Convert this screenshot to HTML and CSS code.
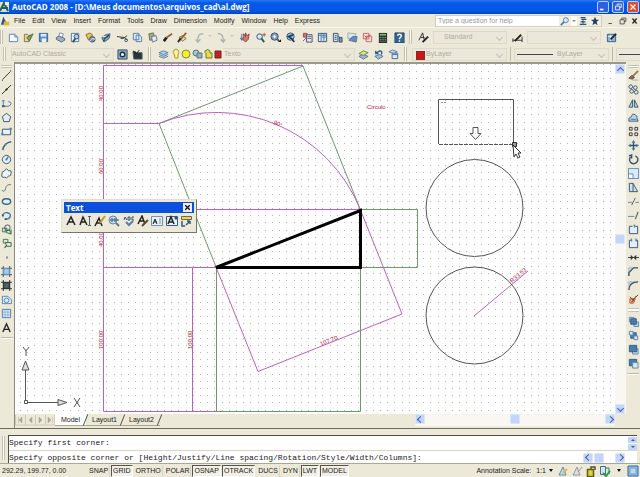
FILE: index.html
```html
<!DOCTYPE html>
<html lang="en">
<head>
<meta charset="utf-8">
<title>AutoCAD 2008</title>
<link rel="stylesheet" href="styles.css">
</head>
<body>
<div class="app">
  <header class="title">
    <svg class="logo" viewBox="0 0 10 12"><path d="M0 1h9v10H0z" fill="#cfe3dc"/><path d="M0 10 4 2l4 8M1 7h7" fill="none" stroke="#24605c" stroke-width="2"/><path d="M5 1h4v3H5z" fill="#e9f4ff"/></svg>
    <h1>AutoCAD 2008 - [D:\Meus documentos\arquivos_cad\al.dwg]</h1>
    <div class="winbtns">
      <button aria-label="Minimize"><svg viewBox="0 0 11 12"><path d="M2 9h4" stroke-width="2"/></svg></button>
      <button aria-label="Restore"><svg viewBox="0 0 11 12"><path d="M4.500 4.500v-2h5v4h-2M2.500 5h5v4.500h-5z"/></svg></button>
      <button class="close" aria-label="Close"><svg viewBox="0 0 11 12"><path d="m2.500 3 6 6m0-6-6 6" stroke-width="1.500"/></svg></button>
    </div>
  </header>

  <nav class="menu">
    <svg class="doc" viewBox="0 0 12 13"><path d="M1 2h7l2 3v7H1z" fill="#f3f0e2"/><path d="M1 11 4 1l5 10z" fill="#33559b"/><path d="M5 7h6v5H4z" fill="#e5b92e"/></svg>
    <button>File</button><button>Edit</button><button>View</button><button>Insert</button><button>Format</button><button>Tools</button><button>Draw</button><button>Dimension</button><button>Modify</button><button>Window</button><button>Help</button><button>Express</button>
    <div class="helpbox">
      <input type="text" aria-label="Help question" placeholder="Type a question for help">
      <button aria-label="Search"><svg viewBox="0 0 12 12"><circle cx="7" cy="5" r="3" fill="#d9ecfa" stroke="#4b75a8"/><path d="m5 7-4 4" stroke="#4b75a8" stroke-width="2"/></svg></button>
      <span class="dd"></span>
      <button aria-label="Communication center"><svg viewBox="0 0 12 12"><path d="M3 2h6M4 4h6M2 10h8M6 5v4M3 7h6" stroke="#31547f" stroke-width="1.500"/></svg></button>
      <button aria-label="Favorites"><svg viewBox="0 0 12 12"><path d="m6 1 1.500 3.500H11L8 7l1 4-3-2-3 2 1-4-3-2.500h3.500z" fill="#243e63" stroke="none"/></svg></button>
    </div>
    <div class="docbtns">
      <button aria-label="Minimize drawing"><svg viewBox="0 0 10 12"><path d="M2 9h4" stroke="#333"/></svg></button>
      <button aria-label="Restore drawing"><svg viewBox="0 0 10 12"><path d="M3.500 4.500v-2h5v4h-2M1.500 4.500h5v5h-5z" stroke="#444"/></svg></button>
      <button aria-label="Close drawing"><svg viewBox="0 0 10 12"><path d="m2 3 5 6m0-6L2 9" stroke="#222" stroke-width="1.500"/></svg></button>
    </div>
  </nav>

  <div class="bar bar1">
    <i class="grip"></i>
    <div class="group">
      <button class="tool" aria-label="New"><svg viewBox="0 0 12 12"><path d="M1.500 2.500h6l3 3v5h-9z" fill="#f2f9ff" stroke="#5b7fa8"/><path d="M7.500 2.500v3h3" stroke="#5b7fa8"/></svg></button>
      <button class="tool" aria-label="Open"><svg viewBox="0 0 12 12"><path d="M1.500 10.500v-8h3l1 1h4l-3 7z" fill="#e9d9a0" stroke="#8a733e"/><path d="m4 6 7-4-4 8z" fill="#7da05a" stroke="#5e6d37"/></svg></button>
      <button class="tool" aria-label="Save"><svg viewBox="0 0 12 12"><path d="M1.500 1.500h9v9h-9z" fill="#5b91c9" stroke="#33618f"/><path d="M3 2h6v3H3z" fill="#d8eafa" stroke="none"/><path d="M4 7h5v4H4z" fill="#e8f3fb" stroke="none"/></svg></button>
    </div>
    <div class="group">
      <button class="tool" aria-label="Plot"><svg viewBox="0 0 12 12"><path d="m4 5 1-4 4 1-1 4" fill="#fff" stroke="#7b8ba0"/><path d="m1.500 6 3-1.500 6 2.500v2l-3.500 2-5.500-3z" fill="#9fb0c5" stroke="#4f6480"/></svg></button>
      <button class="tool" aria-label="Preview"><svg viewBox="0 0 12 12"><path d="M1.500 1.500h8v9h-8z" fill="#e3f1ff" stroke="#53799d"/><circle cx="7" cy="5" r="2.500" fill="#aed0f2"/><path d="M6 7 3 11" stroke-width="2"/></svg></button>
      <button class="tool" aria-label="Publish"><svg viewBox="0 0 12 12"><path d="M1 3 5 1l3 2v4L4 9z" fill="#e8c54d" stroke="#8a6b22"/><circle cx="8" cy="8" r="3" fill="#6d94bd"/><path d="m5 10 3-3 3 1" stroke="#fff"/></svg></button>
      <button class="tool" aria-label="3D DWF"><svg viewBox="0 0 12 12"><path d="m2 6 4-3 5-1-1 5-4 3-3-1z" fill="#79a5c6" stroke="#567"/><path d="m4 7 3-1 3-3M5 8l-1 3" stroke="#264b50" stroke-width="1.500"/><path d="M3 5h3" stroke="#fff"/></svg></button>
    </div>
    <div class="group">
      <button class="tool" aria-label="Cut"><svg viewBox="0 0 12 12"><path d="m0 5 8 1 3 3M11 4 7 7H4" stroke="#262b31"/><circle cx="10" cy="9" r="1.500"/></svg></button>
      <button class="tool" aria-label="Copy"><svg viewBox="0 0 12 12"><path d="M1.500 1.500h6v7h-6zM4.500 3.500h4l2 2v5h-6z" fill="#d8ecfa" stroke="#527ca9"/></svg></button>
      <button class="tool" aria-label="Paste"><svg viewBox="0 0 12 12"><path d="m2 2 5-1 2 7-6 1z" fill="#a3a88c" stroke="#667056"/><path d="m5 5 5-1 1 5-5 2z" fill="#e0edf8" stroke="#647787"/></svg></button>
      <button class="tool" aria-label="Match properties"><svg viewBox="0 0 12 12"><path d="m2 10 3-4" stroke="#222" stroke-width="3"/><path d="m5 6 6-4" stroke="#9b5d2e" stroke-width="2"/></svg></button>
      <button class="tool" aria-label="Block editor"><svg viewBox="0 0 12 12"><path d="m2 6 4-2 4 3-4 3z" fill="#ecdca0" stroke="#786a3d"/><path d="m3 9 7-8" stroke="#985f32" stroke-width="2"/><path d="m1 11 3-4" stroke="#2d2b22" stroke-width="2"/></svg></button>
    </div>
    <div class="group dim">
      <button class="tool" aria-label="Undo"><svg viewBox="0 0 12 12"><path d="M10 2Q4 1 4 10M2 8l2 3 3-3" stroke-width="1.500"/></svg></button><span class="dd"></span>
      <button class="tool" aria-label="Redo"><svg viewBox="0 0 12 12"><path d="M2 2q6-1 6 8M5 8l3 3 2-3" stroke-width="1.500"/></svg></button><span class="dd"></span>
    </div>
    <div class="group">
      <button class="tool" aria-label="Pan"><svg viewBox="0 0 12 12"><path d="M2 2v7m-2-3 2 3 2-3" stroke="#405f86"/><path d="M4 5V2l2 3V1l2 3 2-2-1 6-3 3-3-3z" fill="#d6756c" stroke="#8b4547"/></svg></button>
      <button class="tool" aria-label="Zoom realtime"><svg viewBox="0 0 12 12"><circle cx="5" cy="5" r="3" fill="#d7e7f6"/><path d="m7 7 3 4" stroke-width="2"/><path d="M10 1v4M8 3h4" stroke="#b64b3e"/></svg></button>
      <button class="tool" aria-label="Zoom window"><svg viewBox="0 0 12 12"><circle cx="5" cy="5" r="4" fill="#7d9ab8"/><path d="m8 8 2 2" stroke-width="2"/><path d="M3 5h4M5 3v4" stroke="#fff"/><path d="M9 11h3V8z" fill="#111" stroke="none"/></svg></button>
      <button class="tool" aria-label="Zoom previous"><svg viewBox="0 0 12 12"><circle cx="6" cy="5" r="4" fill="#a8c2dc"/><path d="M9 3 4 5l4 3M8 8l2 3" stroke="#203c5b" stroke-width="2"/></svg></button>
    </div>
    <div class="group">
      <button class="tool" aria-label="Properties"><svg viewBox="0 0 12 12"><path d="M1.500 1.500h4v4h-4z" fill="#d27c71" stroke="#9b4844"/><path d="M5 3h6v8H5z" fill="#dce7f6"/><path d="M6 5h4M6 7h4M1 10l4-4" stroke="#9c4a75"/></svg></button>
      <button class="tool" aria-label="Design center"><svg viewBox="0 0 12 12"><path d="M1.500 1.500h9v9h-9z" fill="#d8ebfa"/><path d="M4.500 2v8M5 5.500h5M7.500 2v8M2 3.500h8" stroke="#4c779d"/></svg></button>
      <button class="tool" aria-label="Tool palettes"><svg viewBox="0 0 12 12"><path d="M1.500 1.500h5v9h-5z" fill="#cfe2f4"/><path d="M3 4h2M3 6h2M3 8h2M7 4l2 3v3h2" stroke="#304f73"/><path d="M8 6h3v5H8z" fill="#7997b6"/></svg></button>
      <button class="tool" aria-label="Sheet set"><svg viewBox="0 0 12 12"><path d="m1 1 9 1-3 5H1z" fill="#d7e6f3" stroke="#9badbc"/><path d="m2 9 4-4h5l-1 6z" fill="#638dba" stroke="#557598"/></svg></button>
      <button class="tool" aria-label="Markup"><svg viewBox="0 0 12 12"><path d="M1.500 1.500h6v6h-6zM4.500 4.500h6v6h-6z" fill="#f7dede" stroke="#c46566"/><path d="m3 4 2 2 4-3" stroke="#b34044"/></svg></button>
      <button class="tool" aria-label="Calculator"><svg viewBox="0 0 12 12"><path d="M2 1h9v11H2z" fill="#25332b" stroke="none"/><path d="M3 3h7" stroke="#79ae72" stroke-width="2"/><path d="M3 6h7M3 8h7M3 10h7" stroke="#aab6ab" stroke-dasharray="1 1"/></svg></button>
    </div>
    <div class="group">
      <button class="tool" aria-label="Help"><svg viewBox="0 0 12 12"><path d="M1 1h10v11H1z" fill="#34648f" stroke="#23496d"/><path d="M4 4q0-1.500 2-1.500t2 1.500-2 3v1M6 9v1.500" stroke="#fff" stroke-width="1.500"/></svg></button>
    </div>
    <i class="grip"></i>
    <button class="tool" aria-label="Text style"><svg viewBox="0 0 12 12"><path d="m1 9 4-8 2 8M3 6h4" stroke="#222"/><path d="m5 11 6-6" stroke="#222" stroke-width="2"/></svg></button>
    <label class="sel w-text"><select aria-label="Text style" disabled><option>Standard</option></select></label>
    <button class="tool" aria-label="Dimension style"><svg viewBox="0 0 12 12"><path d="M1 7v4m10-6v6M1 9h10" stroke="#333"/><path d="m3 10 7-7" stroke="#222" stroke-width="2"/></svg></button>
    <label class="sel w-text"><select aria-label="Dimension style" disabled><option></option></select></label>
    <button class="tool" aria-label="Table style"><svg viewBox="0 0 12 12"><path d="M1.500 2.500h9v8h-9z" fill="#8ab5e0" stroke="#345a86"/><path d="M2 5h8M5 3v7" stroke="#dcebfa"/><path d="m5 8 6-6" stroke="#222" stroke-width="2"/></svg></button>
  </div>

  <div class="bar bar2">
    <i class="grip"></i>
    <label class="sel w-work"><select aria-label="Workspace" disabled><option>AutoCAD Classic</option></select></label>
    <button class="tool" aria-label="Workspace settings"><svg viewBox="0 0 12 12"><path d="M1 1h10v10H1z" fill="#8ca9c4" stroke="#334a61"/><circle cx="6" cy="6" r="2.500" fill="#e8f2fa" stroke="#1f3348" stroke-width="1.500"/></svg></button>
    <button class="tool" aria-label="My workspace"><svg viewBox="0 0 12 12"><path d="M1 3h3l1 1h6v7H2z" fill="#273440" stroke="#4a5a66"/><path d="m1 2 4 3 3-4" stroke="#222"/></svg></button>
    <i class="grip"></i>
    <button class="tool" aria-label="Layers"><svg viewBox="0 0 12 12"><path d="m1 4 5-2 5 2-5 2zM1 6l5 2 5-2M1 8l5 2 5-2" fill="#b9d1e8" stroke="#587da3"/></svg></button>
    <div class="layer">
      <svg viewBox="0 0 52 12"><path d="M3.500 7Q1 4 3 2q2-2 4 0t0 5v3h-3z" fill="#fbf28c" stroke="#a99a38"/><circle cx="15" cy="6" r="4" fill="#f9ef24" stroke="#8a8931"/><circle cx="25" cy="5" r="3" fill="#a6c9d5" stroke="#527782"/><path d="M26 5h5v5h-5z" fill="#9eacb4" stroke="#647580"/><path d="M34 5V3q3-3 5 0v2h2v5h-6V5" fill="#e7dd4a" stroke="#6b7d2c"/><path d="M44 3h6v7h-6z" fill="#c81e20" stroke="#63292a"/></svg>
      <label class="sel"><select aria-label="Layer" disabled><option>Texto</option></select></label>
    </div>
    <button class="tool" aria-label="Make layer current"><svg viewBox="0 0 12 12"><path d="m1 8 5-2 5 2-5 3z" fill="#98b9d9" stroke="#517aa1"/><path d="m1 5 5-3 5 2-5 3z" fill="#e1df85" stroke="#718449"/></svg></button>
    <button class="tool" aria-label="Layer previous"><svg viewBox="0 0 12 12"><path d="m2 8 5-2 4 2-5 3z" fill="#9ebddb" stroke="#517aa1"/><path d="M9 6q2-4-2-4L3 5m0-3v3h3" stroke="#355b84" stroke-width="1.500"/></svg></button>
    <button class="tool" aria-label="Layer states"><svg viewBox="0 0 12 12"><path d="m1 3 4-2 5 2-4 2z" fill="#c2d9ee" stroke="#587da3"/><path d="M4.500 4.500h6v6h-6z" fill="#d8eafa" stroke="#3d6a98"/><path d="M5 6h5" stroke="#3d6a98"/></svg></button>
    <i class="grip"></i>
    <label class="sel w-prop swatch"><select aria-label="Color" disabled><option>ByLayer</option></select></label>
    <i class="rule"></i>
    <label class="sel w-prop line"><select aria-label="Linetype" disabled><option>ByLayer</option></select></label>
    <i class="rule"></i>
    <label class="sel w-rest line"><select aria-label="Lineweight" disabled><option></option></select></label>
  </div>

  <main class="work">
    <aside class="side">
      <i class="hgrip"></i>
      <button class="tool" aria-label="Line"><svg viewBox="0 0 12 12"><path d="m2 10 8-8" stroke="#333"/><path d="M1 11h1M10 1h1" stroke="#39714c" stroke-width="2"/></svg></button>
      <button class="tool" aria-label="Construction line"><svg viewBox="0 0 12 12"><path d="m1 11 10-10" stroke="#222"/><path d="m5 7 2-2" stroke="#1f5d35" stroke-width="2"/></svg></button>
      <button class="tool" aria-label="Polyline"><svg viewBox="0 0 12 12"><path d="M1 3h3M2.500 3v6M2 9h6q3-1 3-3T8 4" stroke="#47749d"/><path d="M1 9h3" stroke="#2c5c87" stroke-width="2"/></svg></button>
      <button class="tool" aria-label="Polygon"><svg viewBox="0 0 12 12"><path d="m6 1.500 4.500 3.500L9 10.500H3L1.500 5z" fill="#e6edf1"/></svg></button>
      <button class="tool" aria-label="Rectangle"><svg viewBox="0 0 12 12"><path d="M1.500 3.500h9v6h-9z" fill="#e6f1fa"/><path d="M0 9h3M9 3h3" stroke="#5b8dba" stroke-width="2"/></svg></button>
      <button class="tool" aria-label="Arc"><svg viewBox="0 0 12 12"><path d="M2 11Q3 3 11 2" stroke-width="1.500"/><path d="M1 10h2M4 5h2M9 2h2" stroke="#4d8bbd" stroke-width="2"/></svg></button>
      <button class="tool" aria-label="Circle"><svg viewBox="0 0 12 12"><circle cx="6" cy="6" r="4.500" fill="#e5f0fa"/><path d="m5 7 3-4M5 6h2" stroke="#4277ad" stroke-width="1.500"/></svg></button>
      <button class="tool" aria-label="Revision cloud"><svg viewBox="0 0 12 12"><path d="M4 3q2-4 4 0 4-1 3 3 0 3-3 3-2 3-4 1-4 1-3-3-1-3 3-4z" fill="#edf3f7"/></svg></button>
      <button class="tool" aria-label="Spline"><svg viewBox="0 0 12 12"><path d="M1 9q3 3 4-2t6-4" stroke="#567b6a"/></svg></button>
      <button class="tool" aria-label="Ellipse"><svg viewBox="0 0 12 12"><ellipse cx="6" cy="6" rx="4.500" ry="3" fill="#e7f2fa" stroke="#376189" stroke-width="1.500"/></svg></button>
      <button class="tool" aria-label="Ellipse arc"><svg viewBox="0 0 12 12"><path d="M2 6q1-4 5-3t3 4-5 3" stroke="#4778a6" stroke-width="1.500"/><path d="M1 6h2M4 10h2" stroke="#24537b" stroke-width="2"/></svg></button>
      <button class="tool" aria-label="Insert block"><svg viewBox="0 0 12 12"><path d="M1.500 4.500h5v4h-5z" fill="#d7ead9" stroke="#47714e"/><circle cx="7" cy="4" r="3"/><path d="m5 9 6 2V6M4 7h6v4" stroke="#3a744e"/></svg></button>
      <button class="tool" aria-label="Make block"><svg viewBox="0 0 12 12"><path d="M2.500 1.500h5v4h-5z" fill="#d7ead9" stroke="#47714e"/><path d="M5 5h6v4H6z" fill="#e4f1e5" stroke="#31603c"/><path d="m4 11 2-3" stroke="#222"/></svg></button>
      <button class="tool" aria-label="Point"><svg viewBox="0 0 12 12"><path d="M6 5h1v2H6z" fill="#222" stroke="none"/></svg></button>
      <button class="tool" aria-label="Hatch"><svg viewBox="0 0 12 12"><path d="M2.500 0v12M9.500 0v12M0 2.500h12M0 9.500h12"/><path d="M3 3h6v6H3z" fill="#a4cdec" stroke="#6799c1"/></svg></button>
      <button class="tool" aria-label="Gradient"><svg viewBox="0 0 12 12"><path d="M2.500 0v12M9.500 0v12M0 2.500h12M0 9.500h12" stroke="#222"/><path d="M3 3h6v6H3z" fill="#55626b" stroke="#252c31"/></svg></button>
      <button class="tool" aria-label="Region"><svg viewBox="0 0 12 12"><path d="M1.500 10.500v-8h6l4 4v4z" fill="#dbeafa" stroke="#5581ae"/><circle cx="6" cy="7" r="2.500" stroke="#5581ae"/></svg></button>
      <button class="tool" aria-label="Table"><svg viewBox="0 0 12 12"><path d="M1.500 1.500h9v9h-9z" fill="#dceafb" stroke="#4c78a5"/><path d="M2 4.500h8M2 7.500h8M4.500 2v8M7.500 2v8" stroke="#8eb2d7"/></svg></button>
      <button class="tool" aria-label="Multiline text"><svg viewBox="0 0 12 12"><path d="m2 11 4-9 4 9M4 8h5" stroke="#222" stroke-width="1.500"/></svg></button>
      <i class="hrule"></i>
    </aside>

    <section class="view">
      <svg class="canvas" role="img" aria-label="Drawing">
        <defs>
          <pattern id="dots" x="5" y="0" width="36" height="36" patternUnits="userSpaceOnUse"><path d="M0 .5h36M0 7.500h36M0 14.500h36M0 22.500h36M0 29.500h36" stroke="#b4b4b4" stroke-dasharray="1 6 1 6 1 7 1 6 1 6"/></pattern>
        </defs>
        <rect width="100%" height="100%" fill="#fff"/>
        <rect width="100%" height="100%" fill="url(#dots)"/>
        <g transform="translate(-16 -64)" fill="none">
          <g stroke="#6a9a66">
            <path d="m160 123.500 144-57.500 57.500 144M160 123.500l57 143.500"/>
            <path d="M361.500 209.500h57v58h-57M217.500 267v144.500h144V267"/>
          </g>
          <g stroke="#bd5ec4">
            <path d="M304 65.500H104.500v346h113M104 123.500h56M104 209.500h257M104 267.500h113M193.500 267v144"/>
            <path d="M160 123.500A155 155 0 0 1 361.500 210L403 314 259 371.500 217 267"/>
            <path d="m475 316 54-45"/>
          </g>
          <path d="M217 267.500 361.500 210.500v57z" stroke="#000" stroke-width="3"/>
          <g stroke="#555">
            <circle cx="475.500" cy="208" r="48.500"/><circle cx="475.500" cy="315.500" r="48.500"/>
            <path d="M439.500 144V99.500h75v45"/><path d="M440 144.500h75" stroke-dasharray="4 1"/>
            <path d="M442 102.500h6" stroke="#999" stroke-dasharray="2 1"/>
            <path d="M474 127.500h5v6h3l-5.500 6-5.500-6h3z" fill="#fff"/>
            <path d="M26.500 401V369M28 402.500h32"/>
            <path d="m26.500 361-3.500 9h7zM68 402.500l-9-3v6z" fill="#ddd"/>
            <path d="m24 347 3 4 3-4m-3 4v5M75 398l6 9m0-9-6 9"/>
            <path d="M25.500 400.500h3v3h-3z"/>
          </g>
          <path d="M513.500 142.500h4v4h-4z" stroke="#333" fill="#999"/>
          <path d="m514 145 1 12 2-3 2 4 2-1-2-4h3z" fill="#fff" stroke="#333"/>
          <g class="dims">
            <text transform="translate(104 101) rotate(-90)">40.00</text>
            <text transform="translate(104 174) rotate(-90)">60.00</text>
            <text transform="translate(104 247) rotate(-90)">40.00</text>
            <text transform="translate(104 349) rotate(-90)">100.00</text>
            <text transform="translate(193 349) rotate(-90)">100.00</text>
            <text transform="translate(322 346) rotate(-22)">107.70</text>
            <text transform="translate(513 283) rotate(-40)">R33.53</text>
            <text transform="translate(274 124) rotate(24)">90°</text>
            <text x="368" y="109">Circulo</text>
          </g>
        </g>
      </svg>
      <div class="vscroll"><button class="sb up" aria-label="Scroll up"></button><i class="thumb"></i><button class="sb down" aria-label="Scroll down"></button></div>
      <div class="tabs">
        <svg class="tabnav" viewBox="0 0 40 12"><path d="M.5 1v10h39V1M10.500 1v10M20.500 1v10M30.500 1v10" stroke="#cfcbbb" fill="none"/><path d="M3.500 3v6M7 3v6L4 6zM17 3v6l-3-3zM24 3v6l3-3zM33 3v6l3-3zM37.500 3v6" fill="#aaa798" stroke="#aaa798" stroke-width=".5"/></svg>
        <button class="tab on">Model</button><button class="tab">Layout1</button><button class="tab">Layout2</button>
      </div>
      <div class="hscroll"><button class="sb left" aria-label="Scroll left"></button><i class="thumb"></i><button class="sb right" aria-label="Scroll right"></button></div>

      <div class="palette">
        <div class="ptitle"><span>Text</span><button aria-label="Close"><svg viewBox="0 0 10 10"><path d="m2.500 2.500 5 5m0-5-5 5" stroke="#111" stroke-width="1.500"/></svg></button></div>
        <div class="pbody">
          <button class="tool" aria-label="Multiline text"><svg viewBox="0 0 12 12"><path d="m2 10 4-8 4 8M4 7h5" stroke="#222" stroke-width="1.500"/></svg></button>
          <button class="tool" aria-label="Single line text"><svg viewBox="0 0 12 12"><path d="m1 10 3-8 4 8M2 7h5" stroke="#222" stroke-width="1.500"/><path d="M10.500 1v10M9 1.500h3M9 10.500h3" stroke="#45617c"/></svg></button>
          <button class="tool" aria-label="Edit text"><svg viewBox="0 0 12 12"><path d="m1 11 4-8 3 8M3 8h4" stroke="#222" stroke-width="1.500"/><path d="m6 8 5-7" stroke="#c79833" stroke-width="2"/></svg></button>
          <button class="tool" aria-label="Find"><svg viewBox="0 0 12 12"><circle cx="5" cy="5" r="4" fill="#c5ddf0" stroke="#6687a5"/><path d="m8 8 3 3" stroke="#577b9b" stroke-width="2"/><path d="M2 5h9M4 3v4M7 3v4" stroke="#365b78"/></svg></button>
          <button class="tool" aria-label="Spell check"><svg viewBox="0 0 12 12"><path d="m1 5 1-3 2 3M5 2v3h2V2zM11 2H9v3h2" stroke="#35536c"/><path d="m3 7 3 3 4-4" stroke="#5381ab" stroke-width="2"/></svg></button>
          <button class="tool" aria-label="Text style"><svg viewBox="0 0 12 12"><path d="m1 9 4-8 3 8M3 6h4" stroke="#222" stroke-width="1.500"/><path d="m5 11 6-6" stroke="#604837" stroke-width="2"/></svg></button>
          <button class="tool" aria-label="Scale text"><svg viewBox="0 0 12 12"><path d="M.5 1.500h11v9H.5z" fill="#e5f1fb" stroke="#6e94b8"/><path d="m2 9 2-5 2 5M3 7h3" stroke="#222"/><path d="M9 3v6" stroke="#6e94b8"/></svg></button>
          <button class="tool" aria-label="Justify text"><svg viewBox="0 0 12 12"><path d="M.5 1.500h11v9H.5z" fill="#e5f1fb" stroke="#385f88"/><path d="m2 9 3-7 3 7M3 7h4" stroke="#222" stroke-width="1.500"/><path d="M9 2h2v2H9z" fill="#385f88"/></svg></button>
          <button class="tool" aria-label="Convert distance"><svg viewBox="0 0 12 12"><path d="M1.500 1.500h10v3h-10z" fill="#ead27a" stroke="#7a6933"/><path d="M2 6v5h3M6 10l4-4m0 0H7m3 0v3" stroke="#315c85" stroke-width="1.500"/></svg></button>
        </div>
      </div>
    </section>

    <aside class="side modify">
      <i class="hgrip"></i>
      <button class="tool" aria-label="Erase"><svg viewBox="0 0 12 12"><path d="m5 7 6-6" stroke="#9d7a42" stroke-width="2"/><path d="m1 9 3-3 3 2-2 2z" fill="#8a6a5e" stroke="#5b4741"/><path d="M5 11h6" stroke="#b0a991"/></svg></button>
      <button class="tool" aria-label="Copy object"><svg viewBox="0 0 12 12"><circle cx="3" cy="3" r="2"/><circle cx="8" cy="4" r="2"/><circle cx="4" cy="8" r="2"/><circle cx="9" cy="9" r="2"/></svg></button>
      <button class="tool" aria-label="Mirror"><svg viewBox="0 0 12 12"><path d="M5 2v8H1zM7 2v8h4z" fill="#bed5e9"/></svg></button>
      <button class="tool" aria-label="Offset"><svg viewBox="0 0 12 12"><path d="M1 10V7l3-2q0-4 4-2 2 1 2 4l1 3z" fill="#b8d5ed" stroke="#31587b"/><path d="M3 8h6" stroke="#476d8f"/></svg></button>
      <button class="tool" aria-label="Array"><svg viewBox="0 0 12 12"><path d="M1.500 1.500h3v3h-3zM7.500 1.500h3v3h-3zM1.500 7.500h3v3h-3zM7.500 7.500h3v3h-3z" stroke="#333"/></svg></button>
      <button class="tool" aria-label="Move"><svg viewBox="0 0 12 12"><path d="M6 2v8M2 6h8" stroke-width="1.500"/><path d="m6 0 2 3H4zM6 12 4 9h4zM0 6l3-2v4zM12 6 9 8V4z" fill="#45789f" stroke="none"/></svg></button>
      <button class="tool" aria-label="Rotate"><svg viewBox="0 0 12 12"><path d="M3 3a4.500 4.500 0 1 0 5-1M1 2l3-1v4" stroke-width="1.500"/></svg></button>
      <button class="tool" aria-label="Scale"><svg viewBox="0 0 12 12"><path d="M.5.500h11v11H.5z" fill="#d9ebfb" stroke="#5d87b1"/><path d="M.5 6.500h5v5h-5z" fill="#fff" stroke="#5d87b1"/></svg></button>
      <button class="tool" aria-label="Stretch"><svg viewBox="0 0 12 12"><path d="M1.500 10.500v-9h4v9zM5.500 1.500l5 9h-5" fill="#cfe2f2"/></svg></button>
      <button class="tool" aria-label="Trim"><svg viewBox="0 0 12 12"><path d="M0 7h5M8 7h4" stroke="#6a8799"/><path d="m4 10 4-8" stroke="#536372"/></svg></button>
      <button class="tool" aria-label="Extend"><svg viewBox="0 0 12 12"><path d="M0 7h7" stroke="#658299"/><path d="m8 10 3-8" stroke="#334"/></svg></button>
      <button class="tool" aria-label="Break at point"><svg viewBox="0 0 12 12"><path d="M5 2.500H1.500v8h9v-8H7" fill="#e2eef9"/><path d="M6 1h1v3" stroke="#4778aa"/></svg></button>
      <button class="tool" aria-label="Break"><svg viewBox="0 0 12 12"><path d="M4 2.500H1.500v8h9v-8H8" fill="#e2eef9"/><path d="M3 1h1v3M8 1h1v3" stroke="#4778aa"/></svg></button>
      <button class="tool" aria-label="Join"><svg viewBox="0 0 12 12"><path d="M0 6h12" stroke="#333"/><path d="m3 3 3 3-3 3zM9 3 6 6l3 3z" fill="#333" stroke="none"/></svg></button>
      <button class="tool" aria-label="Chamfer"><svg viewBox="0 0 12 12"><path d="M1 11V7l5-5h5" stroke-width="1.500"/><path d="M1 6V2h4" stroke="#8ba8c1"/></svg></button>
      <button class="tool" aria-label="Fillet"><svg viewBox="0 0 12 12"><path d="M1 11Q1 2 11 2" stroke-width="1.500"/><path d="M1 6V2h4" stroke="#8ba8c1"/></svg></button>
      <button class="tool" aria-label="Explode"><svg viewBox="0 0 12 12"><path d="M2 5h6l-2 5H2z" fill="#ed9d67" stroke="#c8663f"/><path d="m2 3 5 5M9 2 4 9m7-8-3 3" stroke="#70412e"/></svg></button>
      <i class="hgrip gapped"></i>
      <button class="tool" aria-label="Bring to front"><svg viewBox="0 0 12 12"><path d="M1.500 1.500h5v5h-5zM6.500 6.500h5v5h-5z" fill="#b8d2ea" stroke="#6085a8"/><path d="M3 3h6v6H3z" fill="#4c7ca9" stroke="#315b83"/></svg></button>
      <button class="tool" aria-label="Send to back"><svg viewBox="0 0 12 12"><path d="M3 3h6v6H3z" fill="#4c7ca9" stroke="#315b83"/><path d="M1.500 1.500h4v4h-4zM6.500 6.500h4v4h-4z" fill="#d5e5f3" stroke="#6085a8"/></svg></button>
      <button class="tool" aria-label="Bring above"><svg viewBox="0 0 12 12"><path d="M5 5h6v6H5z" fill="#cbdff0" stroke="#6085a8"/><path d="M1.500 1.500h8v7h-8z" fill="#4c7ca9" stroke="#315b83"/></svg></button>
      <button class="tool" aria-label="Send under"><svg viewBox="0 0 12 12"><path d="M1.500 1.500h8v7h-8z" fill="#4c7ca9" stroke="#315b83"/><path d="M5 5h6v6H5z" fill="#d8e7f4" stroke="#6085a8"/></svg></button>
      <i class="hrule"></i>
    </aside>
  </main>

  <section class="command">
    <i class="cgrip"></i>
    <div class="cbox">
      <div class="crow"><output>Specify first corner:</output><div class="spin"><button aria-label="Scroll history up"></button><button aria-label="Scroll history down"></button></div></div>
      <div class="crow"><input type="text" aria-label="Command line" value="Specify opposite corner or [Height/Justify/Line spacing/Rotation/Style/Width/Columns]:"><div class="cscroll"><button class="sb left" aria-label="Scroll command left"></button><i class="thumb"></i><button class="sb right" aria-label="Scroll command right"></button></div></div>
    </div>
  </section>

  <footer class="status">
    <span class="coords">292.29, 199.77, 0.00</span>
    <button>SNAP</button><button class="on">GRID</button><button>ORTHO</button><button>POLAR</button><button class="on">OSNAP</button><button class="on">OTRACK</button><button>DUCS</button><button>DYN</button><button class="on">LWT</button><button class="on">MODEL</button>
    <span class="scale">Annotation Scale:</span>
    <button class="ratio">1:1<i class="tri"></i></button>
    <div class="tray">
      <button class="tool" aria-label="Annotation visibility"><svg viewBox="0 0 12 12"><path d="m2 10 4-8 3 8z" fill="#c5dced" stroke="#638aae"/><path d="m6 8 4-4" stroke="#ddb743" stroke-width="2"/></svg></button>
      <button class="tool" aria-label="Auto scale"><svg viewBox="0 0 12 12"><path d="m2 10 4-8 3 8zM7 7l4-5" fill="#ddd" stroke="#999"/></svg></button>
      <button class="tool" aria-label="Lock"><svg viewBox="0 0 12 12"><path d="M6 5V2h4v3" stroke="#545329" stroke-width="1.500"/><path d="M2.500 4.500h6v7h-6z" fill="#dfd435" stroke="#5f5b1e" stroke-width="1.500"/></svg></button>
      <button class="tool" aria-label="Standards"><svg viewBox="0 0 12 12"><path d="M1.500 1.500h5v8h-5zM6 3h4v6" fill="#d3e5f2" stroke="#41718b"/><path d="m4 8 3 3 4-5" stroke="#22a044" stroke-width="2"/></svg></button>
      <button class="tool" aria-label="Status menu"><i class="tri"></i></button>
      <button class="tool" aria-label="Clean screen"><svg viewBox="0 0 12 12"><path d="M1 1h10v10H1z" fill="#9cc5e7" stroke="#346591"/><path d="M3 3h6v6H3z" fill="#bcdaf1" stroke="#6d9dc4"/></svg></button>
    </div>
  </footer>
</div>
</body>
</html>
```
FILE: styles.css
```css
* { box-sizing: border-box; }
html, body { height: 100%; }
body {
  margin: 0;
  background: #ece9d8;
  color: #1b1b1b;
  font: 7px/10px "Liberation Sans", Arial, sans-serif;
}
button, input, select, output { font: inherit; color: inherit; }
button { border: 0; margin: 0; padding: 0; background: none; }
svg { display: block; fill: none; stroke: none; }
.app { display: flex; flex-direction: column; height: 100vh; overflow: hidden; }

/* title bar */
.title {
  display: flex;
  align-items: center;
  flex: none;
  height: 14px;
  padding-right: 1px;
  background: linear-gradient(#2b78f0, #0558ea 3px, #0556e4 11px, #0344bd);
  color: #fff;
}
.logo { width: 10px; height: 12px; margin-right: 2px; }
.title h1 { flex: 1; margin: 0; overflow: hidden; white-space: nowrap; font: bold 8px/12px "Open Sans", sans-serif; }
.winbtns { display: flex; gap: 3px; }
.winbtns button { width: 12px; height: 12px; border: 1px solid #b9cff7; border-radius: 2px; background: #2c62df; }
.winbtns svg { width: 10px; height: 10px; stroke: #fff; }
.winbtns .close { background: #d9512c; }

/* menu bar */
.menu { display: flex; align-items: center; flex: none; gap: 1px; height: 13px; }
.menu > button { padding: 0 3px; white-space: nowrap; }
.doc { width: 10px; height: 12px; }
.helpbox { display: flex; align-items: center; width: 167px; height: 12px; margin-left: auto; border: 1px solid #d3cfbe; background: #fff; }
.helpbox input { flex: 1; min-width: 0; padding: 0 2px; border: 0; outline: 0; background: none; }
.helpbox input::placeholder { color: #9a9a9a; opacity: 1; }
.helpbox button { padding: 0 1px; background: #f1eee2; }
.helpbox svg { width: 10px; height: 10px; }
.docbtns { display: flex; gap: 2px; margin-left: 3px; }
.docbtns svg { width: 10px; height: 10px; }
.dd { flex: none; width: 6px; height: 12px; display: grid; place-items: center; }
.dd::after { content: ""; border: 2px solid transparent; border-top-color: #888; border-bottom: 0; }

/* toolbars */
.bar { display: flex; align-items: center; flex: none; overflow: hidden; }
.bar > * { flex: none; }
.bar1 { height: 19px; gap: 3px; border-top: 1px solid #f7f5ec; }
.bar2 { height: 16px; gap: 1px; }
.group { display: flex; gap: 1px; }
.dim { opacity: .35; }
.tool { display: grid; place-items: center; width: 14px; height: 14px; flex: none; }
.tool svg { width: 12px; height: 12px; stroke: #34516d; }
.bar svg { width: 11px; height: 11px; }
.grip { width: 3px; height: 14px; border: solid #c5c1b0; border-width: 0 1px; background: #f9f8f2; }
.bar2 .grip { margin: 0 4px 0 3px; }
.bar1 .grip { margin-right: 1px; }
.bar1 .grip:first-child { margin-right: 0; }
.rule { width: 1px; height: 14px; margin: 0 2px; background: #bdb9a8; }
.sel { position: relative; display: block; height: 13px; }
.sel select {
  appearance: none;
  display: block;
  width: 100%;
  height: 13px;
  padding: 0 12px 0 10px;
  border: 1px solid #dedaca;
  border-radius: 0;
  background: #ebe7da;
  color: #b0ac9d;
  opacity: 1;
}
.sel::after {
  content: "";
  position: absolute;
  right: 5px;
  top: 4px;
  width: 4px;
  height: 4px;
  border: solid #c4c0af;
  border-width: 0 1px 1px 0;
  transform: rotate(45deg);
}
.w-text { width: 74px; }
.w-work { width: 103px; }
.w-work select { padding-left: 0; }
.w-prop { width: 95px; }
.w-rest { flex: 1; }
.layer { display: flex; align-items: center; width: 184px; }
.layer svg { width: 52px; height: 12px; }
.layer .sel { flex: 1; }
.layer select { padding-left: 1px; border-left: 0; }
.swatch::before { content: ""; position: absolute; left: 4px; top: 3px; width: 7px; height: 7px; background: #d41212; border: 1px solid #7b3030; }
.swatch select { padding-left: 13px; }
.line::before { content: ""; position: absolute; left: 3px; top: 6px; width: 36px; height: 1px; background: #444; }
.line select { padding-left: 42px; }

/* workspace */
.work { display: flex; flex: 1; min-height: 0; }
.side { display: flex; flex-direction: column; align-items: center; flex: none; width: 13px; padding-top: 3px; margin-right: 1px; }
.side .tool { width: 12px; }
.side .tool svg { width: 11px; height: 11px; }
.modify { width: 14px; margin: 0; }
.hgrip { width: 11px; height: 3px; border: solid #c5c1b0; border-width: 1px 0; background: #fff; }
.gapped { margin: 2px 0; height: 4px; }
.hrule { width: 12px; height: 2px; margin-top: 3px; border-top: 1px solid #bdb9a8; background: #fff; }
.view {
  position: relative;
  display: grid;
  grid-template: minmax(0, 1fr) 14px / minmax(0, 2fr) minmax(0, 1fr) 11px;
  flex: 1;
  min-width: 0;
  border-top: 2px solid #9b9889;
  border-left: 1px solid #8c897c;
}
.canvas { grid-column: 1 / 3; width: 100%; height: 100%; overflow: hidden; }
.dims { font: 6px/8px "Liberation Sans", Arial, sans-serif; fill: #c02030; }

.sb, .thumb { display: grid; place-items: center; width: 10px; height: 10px; border: 1px solid #dce6fb; border-radius: 1px; background: #c3d5fb; }
.sb::after { content: ""; width: 4px; height: 4px; border: solid #3f5f9e; border-width: 1px 1px 0 0; }
.sb.up::after { transform: translateY(1px) rotate(-45deg); }
.sb.down::after { transform: translateY(-1px) rotate(135deg); }
.sb.left::after { transform: rotate(-135deg); }
.sb.right::after { transform: rotate(45deg); }
.vscroll { display: flex; flex-direction: column; justify-content: space-between; background: #f8f7f2; }
.tabs { display: flex; align-items: flex-start; background: #ece9d8; }
.tabnav { width: 40px; height: 12px; }
.tab { position: relative; height: 12px; padding: 0 6px; border-bottom: 1px solid #aaa694; }
.tab::after { content: ""; position: absolute; right: 0; top: 0; width: 1px; height: 12px; background: #555; transform: rotate(22deg); }
.tab.on { background: #fff; }
.hscroll { grid-column: 2 / 3; display: flex; align-items: flex-start; justify-content: space-between; height: 12px; background: #f8f7f2; }

/* floating toolbar */
.palette { position: absolute; left: 46px; top: 135px; width: 136px; padding: 2px; border: 1px solid; border-color: #e2dfd0 #77756a #77756a #e2dfd0; background: #ece9d8; }
.ptitle { display: flex; align-items: center; justify-content: space-between; height: 11px; padding: 0 2px; background: #0a50dc; color: #fff; font: bold 8px/11px "Open Sans", sans-serif; }
.ptitle button { width: 9px; height: 9px; background: #f0eee6; }
.ptitle svg { width: 9px; height: 9px; }
.pbody { display: flex; justify-content: space-between; padding: 1px 1px 2px 0; }

/* command line */
.command { display: flex; flex: none; height: 35px; padding: 6px 3px 0 2px; border-top: 1px solid #6d6a60; gap: 3px; }
.cgrip { width: 3px; margin: 1px 0 3px; border: solid #c5c1b0; border-width: 0 1px; background: #fff; }
.cbox { flex: 1; min-width: 0; border-top: 1px solid #4f4d46; border-left: 1px solid #4f4d46; font: 8px/12px "Liberation Mono", "Courier New", monospace; }
.crow { display: flex; align-items: center; justify-content: space-between; height: 14px; background: #fff; }
.crow + .crow { border-top: 1px solid #d8d5c8; padding-right: 12px; }
.crow input { flex: 1; min-width: 0; padding: 0; border: 0; outline: 0; background: none; }
.spin { display: grid; gap: 1px; }
.spin button { display: grid; place-items: center; width: 9px; height: 6px; background: #c3d5fb; }
.spin button::after { content: ""; border: 2px solid transparent; border-bottom-color: #3f5f9e; border-top: 0; }
.spin button + button::after { transform: rotate(180deg); }
.cscroll { display: flex; gap: 1px; }
.cscroll .right { margin-left: 10px; }

/* status bar */
.status { display: flex; align-items: center; flex: none; height: 14px; border-top: 1px solid #aaa797; white-space: nowrap; }
.coords { width: 87px; padding-left: 2px; }
.status > button { height: 12px; margin-right: 1px; padding: 0 1px; border: 1px solid transparent; border-right-color: #d8d4c4; }
.status > .on { border-color: #55534a #fff #fff #55534a; background: #f2f0e6; }
.scale { margin-left: auto; }
.status > .ratio { display: flex; align-items: center; gap: 3px; margin: 0 2px 0 4px; border: 0; }
.tri { border: 2px solid transparent; border-top: 3px solid #111; border-bottom: 0; }
.tray { display: flex; }
.tray .tool { height: 12px; }
```
